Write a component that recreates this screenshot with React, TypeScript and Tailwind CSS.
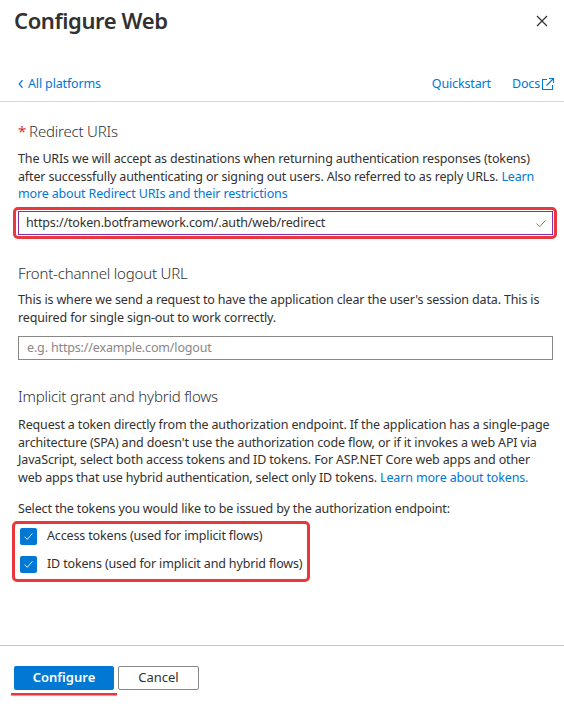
import React from "react";

const font = { fontFamily: '"Noto Sans", "Open Sans", Arial, sans-serif' };

function Check({ className = "" }: { className?: string }) {
  return (
    <svg viewBox="0 0 16 16" className={className} fill="none">
      <path d="M3.5 8.5 L6.5 11.5 L12.5 4.5" stroke="currentColor" strokeWidth="1.1" strokeLinecap="round" strokeLinejoin="round" />
    </svg>
  );
}

function Checkbox({ label }: { label: string }) {
  return (
    <div className="flex h-[24px] items-center pl-[5px]">
      <div className="flex h-[17px] w-[17px] shrink-0 items-center justify-center rounded-[2px] bg-[#0078d4] text-white">
        <Check className="h-[13px] w-[13px]" />
      </div>
      <span className="ml-[10px] whitespace-nowrap text-[12.5px] tracking-[-0.15px] text-[#323130]">{label}</span>
    </div>
  );
}

export default function App() {
  return (
    <div style={font} className="flex h-[704px] w-[564px] flex-col bg-white text-[#323130]">
      {/* Header */}
      <div className="flex h-[40px] items-center justify-between pl-[14px] pr-[16px]">
        <h1 className="text-[22px] font-semibold leading-[40px] tracking-[-0.4px] text-[#323130]">Configure Web</h1>
        <svg viewBox="0 0 12 12" className="mt-[1px] h-[12px] w-[12px] text-[#323130]">
          <path d="M1 1 L11 11 M11 1 L1 11" stroke="currentColor" strokeWidth="1.2" />
        </svg>
      </div>
      <div className="mt-[34px] flex h-[20px] items-center justify-between pl-[18px] pr-[9px] text-[12.5px] tracking-[-0.15px] text-[#0078d4]">
        <div className="flex items-center">
          <svg viewBox="0 0 8 12" className="mr-[4px] h-[10px] w-[6px]">
            <path d="M6 1 L1.5 6 L6 11" stroke="currentColor" strokeWidth="1.6" fill="none" />
          </svg>
          <span>All platforms</span>
        </div>
        <div className="flex items-center">
          <span>Quickstart</span>
          <span className="ml-[21px]">Docs</span>
          <svg viewBox="0 0 14 14" className="ml-[1px] h-[14px] w-[14px]" fill="none">
            <path d="M6 2.5 H1.5 V12.5 H11.5 V8" stroke="currentColor" strokeWidth="1.1" />
            <path d="M8 1.5 H12.5 V6 M12.5 1.5 L5.5 8.5" stroke="currentColor" strokeWidth="1.1" />
          </svg>
        </div>
      </div>
      <div className="mt-[7px] border-b border-[#d6d6d6]" />

      {/* Content */}
      <div className="pl-[18px] pr-[11px]">
        <div className="mt-[18px] flex h-[22px] items-center text-[15px] font-light tracking-[-0.2px] text-[#323130]">
          <span className="mr-[3px] font-normal text-[#d13438]">*</span>
          <span>Redirect URIs</span>
        </div>
        <p className="mt-[8px] whitespace-nowrap text-[12.5px] leading-[17.5px] tracking-[-0.15px]">
          The URIs we will accept as destinations when returning authentication responses (tokens)
          <br />
          after successfully authenticating or signing out users. Also referred to as reply URLs.{" "}
          <span className="text-[#0078d4]">Learn</span>
          <br />
          <span className="text-[#0078d4]">more about Redirect URIs and their restrictions</span>
        </p>
        <div className="-ml-[5px] -mr-[4px] mt-[4.5px] rounded-[5px] border-[3px] border-[#e8383d] py-[1px] pl-[2px] pr-[1px]">
          <div className="flex h-[24px] items-center justify-between border border-[#8a2da5] pl-[7px] pr-[5px]">
            <span className="text-[12.5px] tracking-[-0.15px] text-[#323130]">https://token.botframework.com/.auth/web/redirect</span>
            <svg viewBox="0 0 12 10" className="h-[9px] w-[12px]" fill="none">
              <path d="M1 5 L4.5 8.5 L11 1.5" stroke="#57a300" strokeWidth="1.1" />
            </svg>
          </div>
        </div>

        <div className="mt-[23px] flex h-[22px] items-center text-[15px] font-light tracking-[-0.2px]">Front-channel logout URL</div>
        <p className="mt-[7px] whitespace-nowrap text-[12.5px] leading-[17.5px] tracking-[-0.15px]">
          This is where we send a request to have the application clear the user's session data. This is
          <br />
          required for single sign-out to work correctly.
        </p>
        <div className="mt-[10px] flex h-[24px] items-center border border-[#8a8886] pl-[8px]">
          <span className="text-[12.5px] tracking-[-0.15px] text-[#8a8886]">e.g. https://example.com/logout</span>
        </div>

        <div className="mt-[25px] flex h-[22px] items-center text-[15px] font-light tracking-[-0.2px]">Implicit grant and hybrid flows</div>
        <p className="mt-[9px] whitespace-nowrap text-[12.5px] leading-[17.5px] tracking-[-0.15px]">
          Request a token directly from the authorization endpoint. If the application has a single-page
          <br />
          architecture (SPA) and doesn't use the authorization code flow, or if it invokes a web API via
          <br />
          JavaScript, select both access tokens and ID tokens. For ASP.NET Core web apps and other
          <br />
          web apps that use hybrid authentication, select only ID tokens.{" "}
          <span className="text-[#0078d4]">Learn more about tokens.</span>
        </p>
        <p className="mt-[14px] whitespace-nowrap text-[12.5px] leading-[17.5px] tracking-[-0.15px]">
          Select the tokens you would like to be issued by the authorization endpoint:
        </p>
        <div className="-ml-[6px] mt-[3.5px] flex w-[298px] flex-col gap-[4px] rounded-[5px] border-[3px] border-[#e8383d] pb-[3px]">
          <Checkbox label="Access tokens (used for implicit flows)" />
          <Checkbox label="ID tokens (used for implicit and hybrid flows)" />
        </div>
      </div>

      {/* Footer */}
      <div className="mt-auto h-[59px] border-t border-[#c8c6c4] pl-[14px] pt-[20px]">
        <div className="flex items-center gap-[4px]">
          <div className="relative">
            <button className="flex h-[24px] w-[100px] items-center justify-center rounded-[2px] bg-[#0078d4] text-[13px] font-semibold text-white">
              Configure
            </button>
            <span className="absolute -left-[3px] top-[27px] h-[2px] w-[106px] bg-[#e8383d] shadow-[0_1px_1px_rgba(0,0,0,0.35)]" />
          </div>
          <button className="flex h-[24px] w-[81px] items-center justify-center rounded-[2px] border border-[#8a8886] text-[13px] text-[#323130]">
            Cancel
          </button>
        </div>
      </div>
    </div>
  );
}
